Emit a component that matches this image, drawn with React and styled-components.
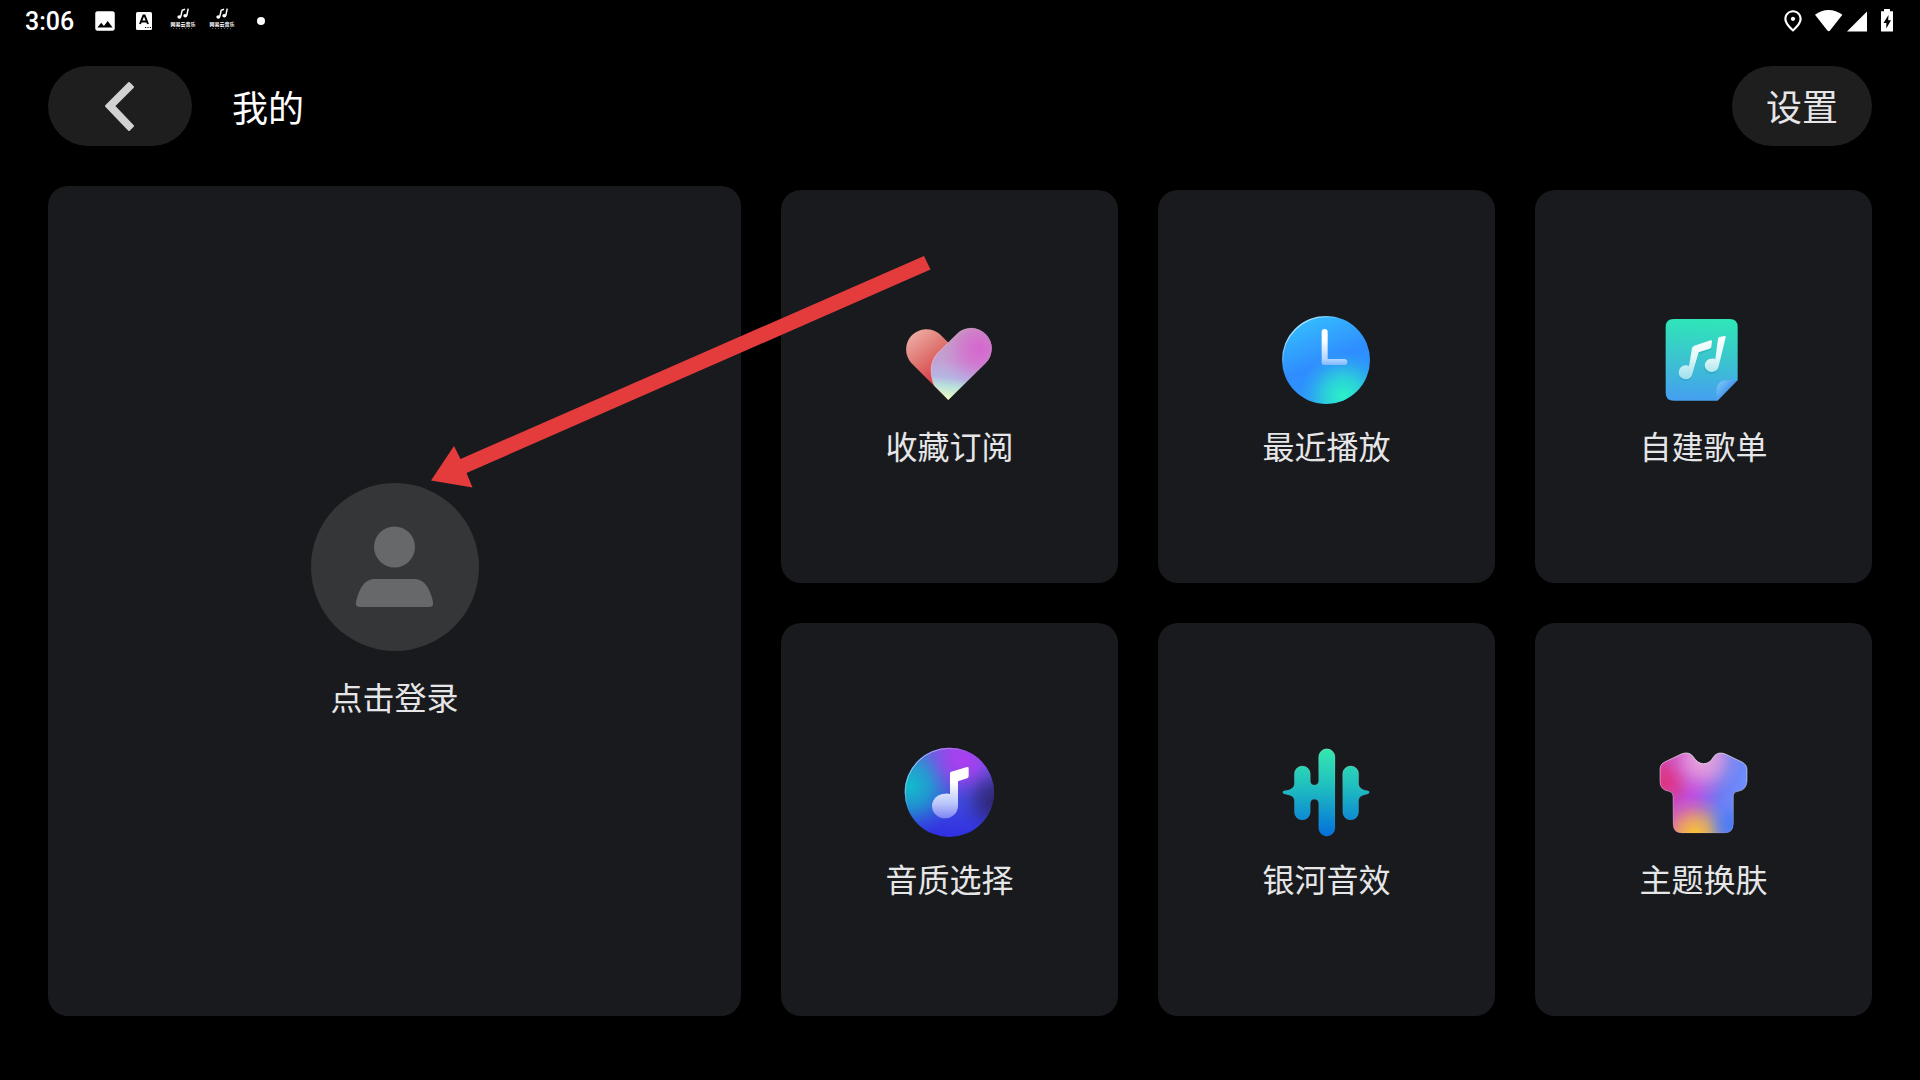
import React from "react";
import styled, { createGlobalStyle } from "styled-components";
import { MdImage, MdOutlinePlace } from "react-icons/md";

const GlobalStyle = createGlobalStyle`
  * {
    box-sizing: border-box;
  }

  body {
    margin: 0;
    background: #000;
    color: #e6e6e8;
    font-family: Roboto, "Noto Sans CJK SC", sans-serif;
  }

  button {
    border: 0;
    padding: 0;
    color: inherit;
    font: inherit;
    cursor: pointer;
  }
`;

const Page = styled.div`
  display: flex;
  flex-direction: column;
  min-height: 100vh;
`;

const StatusBar = styled.div`
  display: flex;
  align-items: center;
  justify-content: space-between;
  height: 42px;
  padding: 0 15px 0 25px;
  color: #fff;
`;

const StatusGroup = styled.div`
  display: flex;
  align-items: center;
  gap: ${(props) => props.$gap || 0}px;
`;

const Clock = styled.time`
  width: 54px;
  padding-top: 2px;
  font-size: 25px;
  font-weight: 500;
  line-height: 42px;
`;

const Header = styled.header`
  display: flex;
  align-items: center;
  justify-content: space-between;
  padding: 24px 48px 40px;
`;

const HeaderLeft = styled.div`
  display: flex;
  align-items: center;
  gap: 40px;
`;

const PillButton = styled.button`
  display: flex;
  align-items: center;
  justify-content: center;
  width: ${(props) => props.$width}px;
  height: 80px;
  padding-bottom: 2px;
  border-radius: 40px;
  background: #1e1e1e;
  font-size: 36px;
`;

const Title = styled.h1`
  margin: 0;
  padding-top: 8px;
  color: #fff;
  font-size: 36px;
  font-weight: 400;
  line-height: 48px;
`;

const Content = styled.main`
  position: relative;
  flex: 1;
  display: grid;
  grid-template-columns: minmax(0, 693fr) minmax(0, 1091fr);
  gap: 40px;
  padding: 0 48px 64px;
`;

const Card = styled.button`
  display: flex;
  flex-direction: column;
  align-items: center;
  justify-content: center;
  border-radius: 20px;
  background: #191a1d;
`;

const LoginCard = styled(Card)`
  gap: 24px;
  padding-top: 4px;
`;

const Tiles = styled.div`
  display: grid;
  grid-template-columns: repeat(3, minmax(0, 1fr));
  grid-auto-rows: 1fr;
  gap: 40px;
  padding-top: 4px;
`;

const Tile = styled(Card)`
  gap: 16px;
  padding-top: 10px;
`;

const Label = styled.span`
  font-size: 32px;
  line-height: 48px;
`;

const Pointer = styled.svg`
  position: absolute;
  top: 0;
  left: 48px;
  width: calc(100% - 96px);
  height: calc(100% - 64px);
  pointer-events: none;
`;

const Glow = ({ id, cx, cy, r, color, opacity = 1 }) => (
  <radialGradient id={id} gradientUnits="userSpaceOnUse" cx={cx} cy={cy} r={r}>
    <stop offset="0" stopColor={color} stopOpacity={opacity} />
    <stop offset="0.4" stopColor={color} stopOpacity={opacity * 0.65} />
    <stop offset="0.75" stopColor={color} stopOpacity={opacity * 0.18} />
    <stop offset="1" stopColor={color} stopOpacity="0" />
  </radialGradient>
);

const Layers = ({ d, fills }) =>
  fills.map((id) => <path key={id} d={d} fill={`url(#${id})`} />);

const HeartIcon = () => {
  const right =
    "M236 303L194 260C179 224 180 188 205 161L262 105A61 61 0 0 1 348 192Z";
  return (
    <svg width="96" height="96" viewBox="97 39 288 288">
      <defs>
        <linearGradient id="heart-left" x1="0.2" y1="0" x2="0.7" y2="1">
          <stop offset="0" stopColor="#efaea6" />
          <stop offset="0.35" stopColor="#e07d77" />
          <stop offset="0.75" stopColor="#dc4148" />
        </linearGradient>
        <linearGradient id="heart-right" x1="0.3" y1="0" x2="0.2" y2="1">
          <stop offset="0" stopColor="#c3a4bd" />
          <stop offset="0.45" stopColor="#c3a0d2" />
          <stop offset="0.68" stopColor="#b5b5e3" />
          <stop offset="0.8" stopColor="#b9e0dc" />
          <stop offset="1" stopColor="#efffc0" />
        </linearGradient>
        <Glow id="heart-glow" cx="330" cy="150" r="120" color="#d85fd0" opacity={0.9} />
        <linearGradient id="heart-rim" x1="0" y1="0" x2="1" y2="0.6">
          <stop offset="0" stopColor="#fff" stopOpacity="0.7" />
          <stop offset="0.6" stopColor="#fff" stopOpacity="0.1" />
        </linearGradient>
      </defs>
      <path
        d="M236 303L124 191A61 61 0 0 1 210 105L238 133L240 280Z"
        fill="url(#heart-left)"
      />
      <Layers d={right} fills={["heart-right", "heart-glow"]} />
      <path d={right} fill="none" stroke="url(#heart-rim)" strokeWidth="2" />
    </svg>
  );
};

const RecentIcon = () => (
  <svg width="96" height="96" viewBox="99 39 288 288">
    <defs>
      <linearGradient id="recent-base" x1="0.2" y1="0" x2="0.6" y2="1">
        <stop offset="0" stopColor="#35c0fd" />
        <stop offset="0.55" stopColor="#2f8dff" />
        <stop offset="1" stopColor="#2b9afa" />
      </linearGradient>
      <Glow id="recent-glow" cx="292" cy="290" r="130" color="#2bf0c8" />
      <linearGradient id="recent-rim" x1="0.1" y1="0" x2="0.5" y2="0.5">
        <stop offset="0" stopColor="#fff" />
        <stop offset="0.6" stopColor="#fff" stopOpacity="0" />
      </linearGradient>
      <linearGradient id="recent-hand" x1="0" y1="0" x2="0" y2="1">
        <stop offset="0.3" stopColor="#fff" />
        <stop offset="0.85" stopColor="#aed4ff" />
        <stop offset="1" stopColor="#80b8ff" />
      </linearGradient>
    </defs>
    <circle cx="240" cy="183" r="132" fill="url(#recent-base)" />
    <circle cx="240" cy="183" r="132" fill="url(#recent-glow)" />
    <circle
      cx="240"
      cy="183"
      r="130"
      fill="none"
      stroke="url(#recent-rim)"
      strokeWidth="4"
    />
    <path
      d="M227 99A9 9 0 0 1 245 99V180H295A9 9 0 0 1 295 198H233Q227 198 227 192Z"
      fill="url(#recent-hand)"
    />
  </svg>
);

const PlaylistIcon = () => (
  <svg width="96" height="96" viewBox="103 39 288 288">
    <defs>
      <linearGradient id="list-base" x1="0.5" y1="0" x2="0.45" y2="1">
        <stop offset="0" stopColor="#2fe6b8" />
        <stop offset="0.5" stopColor="#3bc4cf" />
        <stop offset="1" stopColor="#459ff0" />
      </linearGradient>
      <linearGradient id="list-fold" x1="0" y1="0" x2="0.7" y2="0.6">
        <stop offset="0" stopColor="#86cdf4" />
        <stop offset="0.5" stopColor="#5fb0f4" />
        <stop offset="1" stopColor="#3a86ea" />
      </linearGradient>
      <linearGradient
        id="list-note"
        gradientUnits="userSpaceOnUse"
        x1="240"
        y1="110"
        x2="240"
        y2="240"
      >
        <stop offset="0" stopColor="#fff" />
        <stop offset="0.5" stopColor="#e2f8f8" />
        <stop offset="1" stopColor="#9ddfec" />
      </linearGradient>
    </defs>
    <path
      d="M156 60H324Q348 60 348 84V243L287 305H156Q132 305 132 281V84Q132 60 156 60Z"
      fill="url(#list-base)"
    />
    <path d="M287 305L284 280Q284 243 318 243H348Z" fill="url(#list-fold)" />
    <g fill="#1795a8" opacity="0.35" transform="translate(0 5)">
      <circle cx="192" cy="220" r="21" />
      <circle cx="269" cy="199" r="21" />
      <path d="M201 205L212 147Q213 142 218 140L267 124Q271 123 271 127L269 144Q268 148 264 149L231 160L213 222Z" />
    </g>
    <g fill="url(#list-note)">
      <path d="M192 199Q199 199 202 201L211 148Q212 142 218 140L267 124Q271 123 271 127L269 144Q268 148 264 149L231 160L213 222A21 21 0 1 1 192 199Z" />
      <path d="M269 179Q277 178 281 181L289 119Q290 115 294 114L308 111Q313 110 312 115L291 202A21 20 0 1 1 269 179Z" />
    </g>
  </svg>
);

const QualityIcon = () => {
  const disc = "M239 56A134 134 0 1 1 239 324A134 134 0 1 1 239 56Z";
  return (
    <svg width="96" height="96" viewBox="97 48 288 288">
      <defs>
        <linearGradient id="quality-base" x1="0.5" y1="0" x2="0.5" y2="1">
          <stop offset="0" stopColor="#7658e2" />
          <stop offset="0.6" stopColor="#4048dc" />
          <stop offset="1" stopColor="#2f30e2" />
        </linearGradient>
        <Glow id="quality-cyan" cx="122" cy="170" r="150" color="#10bccb" />
        <Glow id="quality-pink" cx="280" cy="95" r="120" color="#b53cf2" opacity={0.9} />
        <Glow id="quality-dark" cx="378" cy="215" r="110" color="#2b1f5c" opacity={0.85} />
        <linearGradient id="quality-rim" x1="0.1" y1="0.1" x2="0.5" y2="0.5">
          <stop offset="0" stopColor="#fff" stopOpacity="0.6" />
          <stop offset="0.7" stopColor="#fff" stopOpacity="0" />
        </linearGradient>
        <linearGradient id="quality-note" x1="0" y1="0" x2="0" y2="1">
          <stop offset="0.3" stopColor="#fff" />
          <stop offset="0.7" stopColor="#bcc8fb" />
          <stop offset="1" stopColor="#8084f2" />
        </linearGradient>
      </defs>
      <Layers
        d={disc}
        fills={["quality-base", "quality-cyan", "quality-pink", "quality-dark"]}
      />
      <circle
        cx="239"
        cy="190"
        r="132"
        fill="none"
        stroke="url(#quality-rim)"
        strokeWidth="3"
      />
      <path
        d="M241 133Q241 129 245 128L292 114Q297 113 297 118V142Q297 147 292 148L265 157V231A39 37 0 1 1 226 194Q235 193 241 195Z"
        fill="url(#quality-note)"
      />
    </svg>
  );
};

const SoundIcon = () => (
  <svg width="96" height="96" viewBox="99 48 288 288">
    <defs>
      <linearGradient
        id="sound-fill"
        gradientUnits="userSpaceOnUse"
        x1="240"
        y1="60"
        x2="240"
        y2="321"
      >
        <stop offset="0" stopColor="#33e8ae" />
        <stop offset="0.45" stopColor="#1fbcc0" />
        <stop offset="1" stopColor="#0470dc" />
      </linearGradient>
      <linearGradient id="sound-rim" x1="0" y1="0" x2="0" y2="1">
        <stop offset="0" stopColor="#fff" stopOpacity="0.35" />
        <stop offset="0.5" stopColor="#fff" stopOpacity="0.08" />
      </linearGradient>
    </defs>
    <g fill="url(#sound-fill)" stroke="url(#sound-rim)" strokeWidth="2">
      <path d="M145 135A24 24 0 0 1 193 135V155Q194 168 205 168Q217 168 218 155V84A24 24 0 0 1 267 84V297A24 24 0 0 1 218 297V224Q217 211 205 211Q194 211 193 224V249A24 24 0 0 1 145 249V213Q143 201 128 198L115 195Q110 194 110 190Q110 186 115 185L128 183Q143 179 145 166Z" />
      <path d="M290 135A24 24 0 0 1 338 135V166Q340 179 354 183L365 185Q370 186 370 190Q370 194 365 195L354 198Q340 201 338 213V249A24 24 0 0 1 290 249Z" />
    </g>
  </svg>
);

const ThemeIcon = () => {
  const shirt =
    "M153 202Q153 189 141 187Q114 183 114 157V122Q114 106 128 99L178 75Q200 66 213 82Q226 104 245 104Q263 104 275 83Q288 66 310 75L360 99Q375 107 375 122V157Q373 184 348 187Q334 189 334 202V284Q334 312 306 312H181Q153 312 153 284Z";
  return (
    <svg width="96" height="96" viewBox="102 48 288 288">
      <defs>
        <linearGradient id="theme-base" x1="0" y1="0.3" x2="1" y2="0.5">
          <stop offset="0" stopColor="#d24bb4" />
          <stop offset="0.42" stopColor="#bd4ee0" />
          <stop offset="0.72" stopColor="#6f7cf2" />
          <stop offset="1" stopColor="#6d92ff" />
        </linearGradient>
        <Glow id="theme-red" cx="130" cy="160" r="85" color="#e0307a" opacity={0.85} />
        <Glow id="theme-pink" cx="245" cy="90" r="115" color="#f0b4dc" opacity={0.9} />
        <Glow id="theme-yellow" cx="218" cy="318" r="115" color="#ffc62e" />
        <Glow id="theme-blue" cx="335" cy="290" r="80" color="#4a7af2" />
        <linearGradient id="theme-rim" x1="0" y1="0" x2="0" y2="1">
          <stop offset="0" stopColor="#fff" stopOpacity="0.6" />
          <stop offset="1" stopColor="#fff" stopOpacity="0.1" />
        </linearGradient>
      </defs>
      <Layers
        d={shirt}
        fills={[
          "theme-base",
          "theme-red",
          "theme-pink",
          "theme-yellow",
          "theme-blue",
        ]}
      />
      <path d={shirt} fill="none" stroke="url(#theme-rim)" strokeWidth="3" />
    </svg>
  );
};

const Avatar = () => (
  <svg width="168" height="168" viewBox="0 0 168 168">
    <circle cx="84" cy="84" r="84" fill="#353638" />
    <circle cx="83.5" cy="64" r="20.5" fill="#676869" />
    <path
      d="M64 96H103C114 96 119 106 122 119Q123 124 118 124H49Q44 124 45 119C48 106 53 96 64 96Z"
      fill="#676869"
    />
  </svg>
);

const BackIcon = () => (
  <svg width="40" height="60" viewBox="100 75 40 60">
    <path
      d="M106 106L129 83L133 87L114 106L133 126L129 130Z"
      fill="#d2d2d2"
      stroke="#d2d2d2"
      strokeWidth="2"
      strokeLinejoin="round"
    />
  </svg>
);

const LetterIcon = () => (
  <svg width="26" height="26" viewBox="0 0 26 26">
    <rect x="5" y="4" width="16" height="18" rx="1.5" fill="#fff" />
    <path
      d="M9 16L12.4 7.5H13.6L17 16M10.5 13.5H15.5"
      fill="none"
      stroke="#000"
      strokeWidth="2"
    />
    <path d="M14 19.5h1.2M16.4 19.5h1.2M18.8 19.5h1.2" stroke="#000" />
  </svg>
);

const MusicAppIcon = () => (
  <svg width="26" height="26" viewBox="0 0 26 26" fill="#fff">
    <ellipse cx="9.3" cy="9" rx="2" ry="1.7" />
    <ellipse cx="15.3" cy="7.8" rx="2" ry="1.7" />
    <path
      d="M10.8 8.5L12.2 2.2L15 1.2M16.8 7.5L18.2 0.6"
      fill="none"
      stroke="#fff"
      strokeWidth="1.5"
    />
    <text x="13" y="18" fontSize="5" fontWeight="700" textAnchor="middle">
      网易云音乐
    </text>
    <path
      d="M3 20.5H23"
      stroke="#777"
      strokeWidth="0.8"
      strokeDasharray="1 2"
    />
  </svg>
);

const DotIcon = () => (
  <svg width="26" height="26" viewBox="0 0 26 26">
    <circle cx="13" cy="13" r="4" fill="#fff" />
  </svg>
);

const PlaceIcon = styled(MdOutlinePlace)`
  width: 40px;
  height: 26px;
`;

const WifiIcon = () => (
  <svg width="32" height="26" viewBox="0 0 32 26">
    <path
      d="M2 6.8C10 0.4 21 0.4 29.4 6.8L17 22.6Q15.7 23.8 14.4 22.6Z"
      fill="#fff"
    />
  </svg>
);

const SignalIcon = () => (
  <svg width="24" height="26" viewBox="0 0 24 26">
    <path d="M2 23.5L22 3.5V23.5Z" fill="#fff" />
  </svg>
);

const BatteryIcon = () => (
  <svg width="36" height="26" viewBox="0 0 36 26">
    <path d="M15 1H21V3.2H24V23.5H12V3.2H15Z" fill="#fff" />
    <path d="M19.5 7L14.5 15H17.3V20.5L22 12.2H19.2Z" fill="#000" />
  </svg>
);

const tiles = [
  { name: "收藏订阅", Icon: HeartIcon },
  { name: "最近播放", Icon: RecentIcon },
  { name: "自建歌单", Icon: PlaylistIcon },
  { name: "音质选择", Icon: QualityIcon },
  { name: "银河音效", Icon: SoundIcon },
  { name: "主题换肤", Icon: ThemeIcon },
];

const App = () => {
  return (
    <Page>
      <GlobalStyle />
      <StatusBar>
        <StatusGroup $gap={13}>
          <Clock>3:06</Clock>
          <MdImage size={26} />
          <LetterIcon />
          <MusicAppIcon />
          <MusicAppIcon />
          <DotIcon />
        </StatusGroup>
        <StatusGroup>
          <PlaceIcon />
          <WifiIcon />
          <SignalIcon />
          <BatteryIcon />
        </StatusGroup>
      </StatusBar>
      <Header>
        <HeaderLeft>
          <PillButton $width={144} aria-label="返回">
            <BackIcon />
          </PillButton>
          <Title>我的</Title>
        </HeaderLeft>
        <PillButton $width={140}>设置</PillButton>
      </Header>
      <Content>
        <LoginCard>
          <Avatar />
          <Label>点击登录</Label>
        </LoginCard>
        <Tiles>
          {tiles.map(({ name, Icon }) => (
            <Tile key={name}>
              <Icon />
              <Label>{name}</Label>
            </Tile>
          ))}
        </Tiles>
        <Pointer viewBox="0 0 1824 830">
          <path
            d="M383 294.5L406 260L412.5 273L876 70L882.5 83.5L418.5 287L424.5 301.5Z"
            fill="#e43c3c"
          />
        </Pointer>
      </Content>
    </Page>
  );
};

export default App;
